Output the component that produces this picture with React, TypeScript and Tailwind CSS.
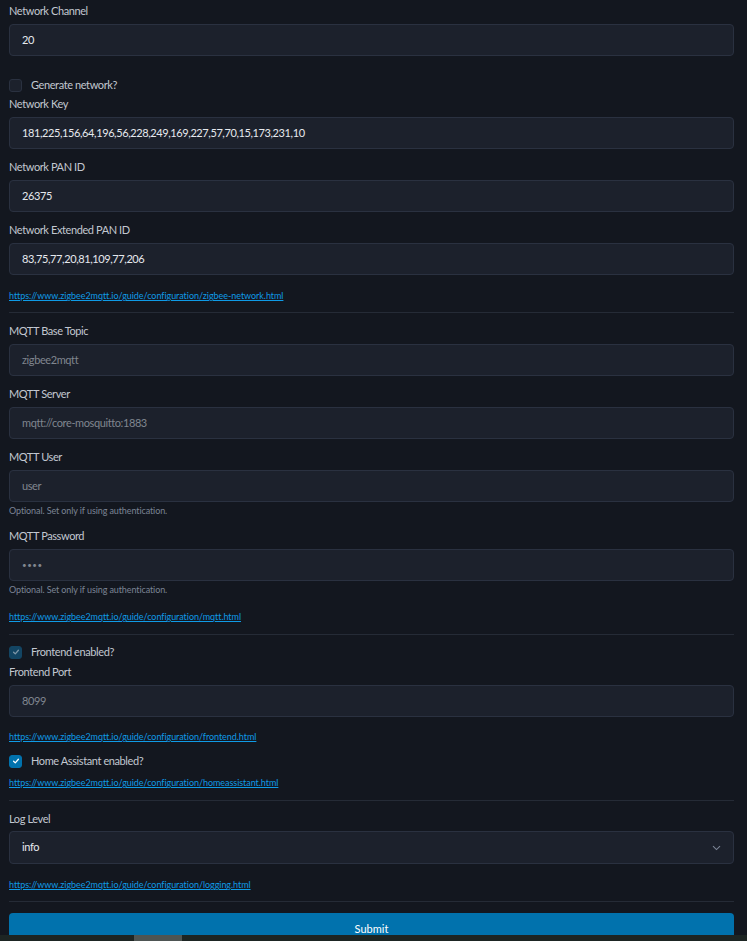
type FieldProps = {
  label: string
  value: string
  muted?: boolean
  dots?: boolean
  helper?: string
  className?: string
}

function Field({ label, value, muted, dots, helper, className = "" }: FieldProps) {
  return (
    <div className={"flex flex-col " + className}>
      <label className="h-4 text-[11px] leading-4 text-[#c2c7d0]">{label}</label>
      <div
        className={
          "mt-[5px] flex h-8 items-center rounded-[4px] border border-[#2a3140] bg-[#1c212c] px-3 " +
          (dots ? "text-[8px] tracking-[0.5px] " : "text-[11px] ") +
          (muted ? "text-[#80868f]" : "text-[#e6e9ee]")
        }
      >
        {value}
      </div>
      {helper && (
        <small className="mt-[3px] h-3 text-[9px] leading-3 tracking-[-0.1px] text-[#7b8495]">
          {helper}
        </small>
      )}
    </div>
  )
}

function Check({
  label,
  checked,
  dim,
  className = ""
}: {
  label: string
  checked?: boolean
  dim?: boolean
  className?: string
}) {
  let box = "border-[#2a3140] bg-[#1c212c]"
  if (checked) box = dim ? "border-[#134563] bg-[#134563]" : "border-[#0172ad] bg-[#0172ad]"
  return (
    <div className={"flex h-4 items-center gap-[9px] " + className}>
      <span
        className={"flex h-[13px] w-[13px] items-center justify-center rounded-[3px] border " + box}
      >
        {checked && (
          <svg width="8" height="8" viewBox="0 0 10 10" fill="none">
            <path
              d="M2 5.3 4.1 7.3 8 2.8"
              stroke={dim ? "#7f97a8" : "#ffffff"}
              strokeWidth="1.6"
              strokeLinecap="round"
              strokeLinejoin="round"
            />
          </svg>
        )}
      </span>
      <span className="text-[11px] leading-4 text-[#c2c7d0]">{label}</span>
    </div>
  )
}

function DocLink({ href, className = "" }: { href: string; className?: string }) {
  return (
    <a
      href={href}
      className={"block h-[14px] text-[9px] leading-[14px] tracking-[-0.05px] text-[#0f9be6] underline " + className}
    >
      {href}
    </a>
  )
}

function Divider({ className = "" }: { className?: string }) {
  return <hr className={"h-px border-0 bg-[#252b36] " + className} />
}

export default function App() {
  return (
    <div className="relative min-h-screen bg-[#13171f] font-['Lato','Noto_Sans',sans-serif] tracking-[-0.4px]">
      <form className="flex flex-col pl-[9px] pr-[13px] pt-[3px]">
        <Field label="Network Channel" value="20" />
        <Check label="Generate network?" className="mt-[21px]" />
        <Field
          label="Network Key"
          value="181,225,156,64,196,56,228,249,169,227,57,70,15,173,231,10"
          className="mt-[3px]"
        />
        <Field label="Network PAN ID" value="26375" className="mt-[10px]" />
        <Field label="Network Extended PAN ID" value="83,75,77,20,81,109,77,206" className="mt-[10px]" />
        <DocLink href="https://www.zigbee2mqtt.io/guide/configuration/zigbee-network.html" className="mt-[14px]" />
        <Divider className="mt-[9px]" />

        <Field label="MQTT Base Topic" value="zigbee2mqtt" muted className="mt-[10px]" />
        <Field label="MQTT Server" value="mqtt://core-mosquitto:1883" muted className="mt-[10px]" />
        <Field
          label="MQTT User"
          value="user"
          muted
          helper="Optional. Set only if using authentication."
          className="mt-[10px]"
        />
        <Field
          label="MQTT Password"
          value="••••"
          muted
          dots
          helper="Optional. Set only if using authentication."
          className="mt-[11px]"
        />
        <DocLink href="https://www.zigbee2mqtt.io/guide/configuration/mqtt.html" className="mt-[14px]" />
        <Divider className="mt-[10px]" />

        <Check label="Frontend enabled?" checked dim className="mt-[9px]" />
        <Field label="Frontend Port" value="8099" muted className="mt-[4px]" />
        <DocLink href="https://www.zigbee2mqtt.io/guide/configuration/frontend.html" className="mt-[13px]" />

        <Check label="Home Assistant enabled?" checked className="mt-[9px]" />
        <DocLink href="https://www.zigbee2mqtt.io/guide/configuration/homeassistant.html" className="mt-[7px]" />
        <Divider className="mt-[10px]" />

        <div className="mt-[10px] flex flex-col">
          <label className="h-4 text-[11px] leading-4 text-[#c2c7d0]">Log Level</label>
          <div className="mt-[4px] flex h-[33px] items-center justify-between rounded-[4px] border border-[#2a3140] bg-[#1c212c] px-3 text-[11px] text-[#e6e9ee]">
            <span>info</span>
            <svg width="9" height="6" viewBox="0 0 9 6" fill="none">
              <path d="M1 1.2 4.5 4.6 8 1.2" stroke="#7b8495" strokeWidth="1.1" />
            </svg>
          </div>
        </div>
        <DocLink href="https://www.zigbee2mqtt.io/guide/configuration/logging.html" className="mt-[14px]" />
        <Divider className="mt-[9px]" />

        <button
          type="button"
          className="mt-[11px] h-8 rounded-t-[4px] bg-[#0172ad] text-[11px] tracking-normal text-white"
        >
          Submit
        </button>
      </form>

      <div className="fixed inset-x-0 bottom-0 h-[6px] bg-[#1d2523]">
        <div className="ml-[134px] h-full w-[48px] bg-[#4e5553]" />
      </div>
    </div>
  )
}
